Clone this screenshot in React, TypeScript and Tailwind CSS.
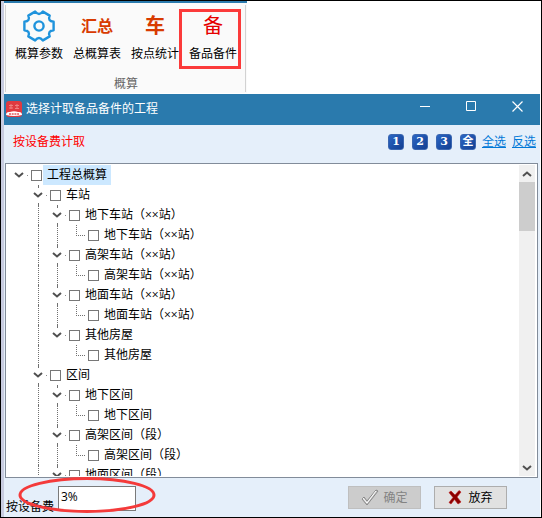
import { useState } from "react";
import { clsx } from "clsx";

// hasMore: further siblings follow the listed children
type TreeNode = { label: string; children?: TreeNode[]; hasMore?: boolean };

const TREE: TreeNode = {
  label: "工程总概算",
  hasMore: true,
  children: [
    {
      label: "车站",
      children: [
        { label: "地下车站（××站）", children: [{ label: "地下车站（××站）" }] },
        { label: "高架车站（××站）", children: [{ label: "高架车站（××站）" }] },
        { label: "地面车站（××站）", children: [{ label: "地面车站（××站）" }] },
        { label: "其他房屋", children: [{ label: "其他房屋" }] },
      ],
    },
    {
      label: "区间",
      children: [
        { label: "地下区间", children: [{ label: "地下区间" }] },
        { label: "高架区间（段）", children: [{ label: "高架区间（段）" }] },
        { label: "地面区间（段）", children: [] },
      ],
    },
  ],
};

function Chevron({ up = false }: { up?: boolean }) {
  return (
    <svg width="10" height="8" viewBox="0 0 10 8" fill="none" aria-hidden="true">
      <path d={up ? "M1 6 5 2.5 9 6" : "M1 2 5 5.5 9 2"} stroke="#505050" strokeWidth="2" />
    </svg>
  );
}

// guides[i] tells whether the dotted line of ancestor column i runs on past this row
function Branch({ node, guides, last }: { node: TreeNode; guides: boolean[]; last: boolean }) {
  const [open, setOpen] = useState(true);
  const root = guides.length === 0;
  const children = node.children ?? [];

  return (
    <li>
      <div className="flex h-5 items-center">
        {guides.map((line, i) => (
          <span key={i} className="h-5 w-[19px] shrink-0 pl-[10px]">
            {line && <span className="block h-full border-l border-dotted border-[#707070]" />}
          </span>
        ))}
        {node.children ? (
          <span className="flex h-5 w-[19px] shrink-0 flex-col pl-[5px]">
            <span className={clsx("ml-[5px] h-0.5 border-dotted border-[#707070]", !root && "border-l")} />
            <button type="button" aria-label={node.label} onClick={() => setOpen(!open)} className="flex h-4 items-center justify-between">
              <Chevron />
              <span className="size-px bg-[#909090]" />
            </button>
            <span className={clsx("ml-[5px] h-0.5 border-dotted border-[#707070]", !last && "border-l")} />
          </span>
        ) : (
          <span className="h-5 w-[19px] shrink-0 pl-[10px]">
            <span className="block h-[11px] border-b border-l border-dotted border-[#707070]" />
          </span>
        )}
        <label className="flex h-5 items-center pl-[3px]">
          <input type="checkbox" className="size-[11px] appearance-none border border-[#777777] bg-white checked:bg-[#2a7aad]" />
          <span className={clsx("ml-px h-5 px-1 leading-5 whitespace-nowrap", root && "bg-[#cce8ff]")}>{node.label}</span>
        </label>
      </div>
      {open && children.length > 0 && (
        <ul>
          {children.map((child, i) => (
            <Branch
              key={i}
              node={child}
              guides={[...guides, !root && !last]}
              last={i === children.length - 1 && !node.hasMore}
            />
          ))}
        </ul>
      )}
    </li>
  );
}

function GearIcon() {
  return (
    <svg width="32" height="32" viewBox="0 0 32 32" fill="none" stroke="#1f93dc" strokeWidth="2.4" strokeLinejoin="round" aria-hidden="true">
      <path d="M30.600 11.800V20.200Q24.300 20.800 26.700 26.400L19.900 30.400Q16 25.600 12.100 30.400L5.300 26.400Q7.700 20.800 1.400 20.200V11.800Q7.700 11.200 5.300 5.600L12.100 1.600Q16 6.400 19.900 1.600L26.700 5.600Q24.300 11.200 30.600 11.800Z" />
      <circle cx="16" cy="16" r="4.600" />
    </svg>
  );
}

function AppIcon() {
  return (
    <svg width="16" height="16" viewBox="0 0 16 16" aria-hidden="true">
      <rect width="16" height="16" rx="3" fill="#df3a40" />
      <path d="M3 4.500h4M3 7h4M5 3v5M9 4.500h4M9 7.500h4M11 3v5" stroke="#f08080" />
      <path d="M0 14q0-3 3-3h1q4-1.500 8 0h1q3 0 3 3-8 2-16 0Z" fill="#fff" />
      <path d="M3 13h10" stroke="#e0585c" strokeWidth="1.500" strokeDasharray="2 .7" />
    </svg>
  );
}

function RibbonButton({ label, children }: { label: string; children: React.ReactNode }) {
  return (
    <button type="button" className="flex w-12 flex-col items-center">
      <span className="flex h-8 items-center whitespace-nowrap">{children}</span>
      <span className="mt-0.5 leading-5 whitespace-nowrap">{label}</span>
    </button>
  );
}

function Ribbon() {
  return (
    <div className="flex h-[92px] shrink-0 bg-white">
      <div className="border-t-2 border-[#2a7aad] bg-[#fafafa] pr-px pl-px">
        <div className="mt-0.5 flex h-[87px] flex-col items-center border-x border-[#d2d2d2] pr-[7px] pl-2">
          <div className="relative mt-[5px] flex gap-2.5 px-px">
            <RibbonButton label="概算参数">
              <GearIcon />
            </RibbonButton>
            <RibbonButton label="总概算表">
              <span className="text-[16px] font-bold text-[#d83b01]">汇总</span>
            </RibbonButton>
            <RibbonButton label="按点统计">
              <span className="text-[20px] font-bold text-[#d83b01]">车</span>
            </RibbonButton>
            <RibbonButton label="备品备件">
              <span className="text-[20px] text-[#e60000]">备</span>
            </RibbonButton>
            <span className="pointer-events-none absolute -top-px -right-[3px] h-[60px] w-[62px] border-3 border-[#fb3a3a]" />
          </div>
          <span className="mt-2.5 leading-5 text-[#666666]">概算</span>
        </div>
      </div>
    </div>
  );
}

function TitleBar() {
  return (
    <header className="flex h-[31px] shrink-0 items-start bg-[#2a7aad] pt-[7px] pl-0.5 text-white">
      <AppIcon />
      <h1 className="ml-1 flex-1 leading-4">选择计取备品备件的工程</h1>
      <div className="flex h-[11px] items-center">
        <button type="button" aria-label="最小化" className="flex w-[46px] justify-center">
          <svg width="11" height="11" viewBox="0 0 11 11" stroke="#fff"><path d="M0 5.500h10" /></svg>
        </button>
        <button type="button" aria-label="最大化" className="flex w-[46px] justify-center">
          <svg width="11" height="11" viewBox="0 0 11 11" fill="none" stroke="#fff"><path d="M.5.5h9v9H.5z" /></svg>
        </button>
        <button type="button" aria-label="关闭" className="flex w-[46px] justify-center">
          <svg width="11" height="11" viewBox="0 0 11 11" stroke="#fff" strokeWidth="1.200"><path d="m.5.5 10 10M10.500.5l-10 10" /></svg>
        </button>
      </div>
    </header>
  );
}

export default function App() {
  const [rate, setRate] = useState("3%");

  return (
    <div className="flex h-screen flex-col border border-black bg-white font-['Open_Sans','Noto_Sans_CJK_SC',sans-serif] text-[12px] text-black">
      <div className="flex min-h-0 flex-1 flex-col border-r border-l-3 border-r-white border-l-[#c8cce0]">
        <Ribbon />
        <main className="mt-px flex min-h-0 flex-1 flex-col bg-[#e5effa]">
          <TitleBar />
          <div className="flex h-[38px] shrink-0 items-center gap-2 pr-1 pb-1 pl-[9px]">
            <p className="flex-1 text-[#ff0000]">按设备费计取</p>
            <div className="flex gap-2">
              {["1", "2", "3", "全"].map((level) => (
                <button
                  key={level}
                  type="button"
                  className="size-4 rounded-[3px] border border-[#3a66b0] bg-linear-to-br from-[#2b66c4] to-[#123f92] text-center font-['DejaVu_Serif','Noto_Sans_CJK_SC',serif] text-[11px] leading-[14px] font-bold text-white"
                >
                  {level}
                </button>
              ))}
            </div>
            <div className="flex gap-1.5 -ml-0.5">
              <a href="#all" className="text-[#0078d7] underline">全选</a>
              <a href="#invert" className="text-[#0078d7] underline">反选</a>
            </div>
          </div>

          <div className="mr-0.5 ml-px flex min-h-0 flex-1 border border-[#828c9a] bg-white p-px">
            <ul className="min-w-0 flex-1 overflow-hidden pl-0.5">
              <Branch node={TREE} guides={[]} last />
            </ul>
            <div className="mr-px flex w-4 shrink-0 flex-col bg-[#f0f0f0]">
              <button type="button" aria-label="向上" className="flex h-[17px] items-center justify-center"><Chevron up /></button>
              <div className="h-[49px] bg-[#cdcdcd]" />
              <button type="button" aria-label="向下" className="mt-auto flex h-[17px] items-center justify-center"><Chevron /></button>
            </div>
          </div>

          <footer className="flex h-[39px] shrink-0 items-start pt-2 pr-[33px] pl-0.5">
            <div className="relative flex flex-1">
              <label htmlFor="rate" className="w-[52px] pt-3 leading-[18px] whitespace-nowrap">按设备费</label>
              <input
                id="rate"
                value={rate}
                onChange={(e) => setRate(e.target.value)}
                className="h-[25px] w-[78px] border border-[#7a7a7a] bg-white px-0.5 pb-1"
              />
              <svg className="pointer-events-none absolute -top-2.5 left-3" width="140" height="38" viewBox="0 0 140 38" fill="none" aria-hidden="true">
                <ellipse cx="69" cy="19" rx="67" ry="16.500" stroke="#f43a3a" strokeWidth="3" />
              </svg>
            </div>
            <button type="button" disabled className="flex h-[23px] w-[73px] items-center justify-center gap-1 border border-[#bfbfbf] bg-[#cccccc] text-[#838383]">
              <svg width="18" height="17" viewBox="0 0 18 17" aria-hidden="true">
                <path d="m1 10 2-2 3 4L15 1l2 1L6 16Z" fill="#c4c4c4" stroke="#888" />
                <path d="m2 9 4 5L15 2" fill="none" stroke="#fff" />
              </svg>
              确定
            </button>
            <button type="button" className="ml-[13px] flex h-[23px] w-[73px] items-center justify-center gap-1.5 border border-[#adadad] bg-[#e1e1e1]">
              <svg width="14" height="15" viewBox="0 0 14 15" aria-hidden="true">
                <path d="M1 2.500 3 1l4 4 4-4.500L13 2 9 7l4 5-3 2-3.500-4.500L3 14l-2-1.500 4-5Z" fill="#8b0000" stroke="#c01818" strokeWidth=".6" />
              </svg>
              放弃
            </button>
          </footer>
        </main>
      </div>
    </div>
  );
}
